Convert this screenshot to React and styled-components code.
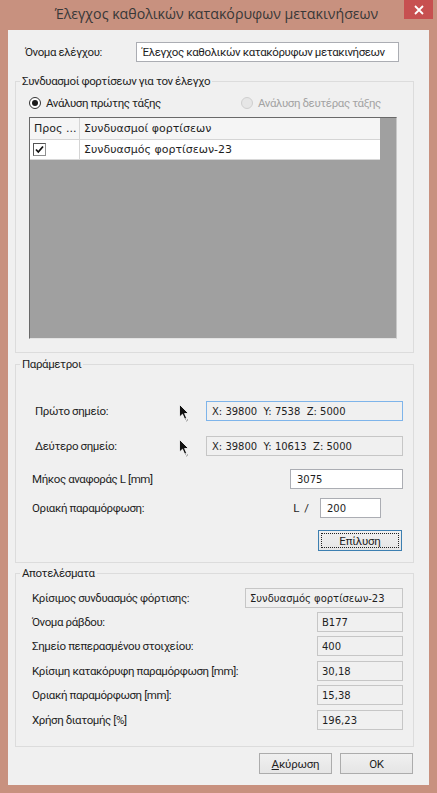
import React from 'react';
import styled, { createGlobalStyle } from 'styled-components';

const GlobalStyle = createGlobalStyle`
  html, body {
    margin: 0;
    padding: 0;
  }
  body {
    background: #c8917f;
    font-family: Roboto, "Noto Sans", sans-serif;
  }
`;

const Window = styled.div`
  width: 437px;
  height: 793px;
  background: #c8917f;
  display: flex;
  flex-direction: column;
  box-sizing: border-box;
`;

const TitleBar = styled.div`
  height: 30px;
  display: grid;
  grid-template-columns: 1fr auto 1fr;
  padding: 0 4px 0 0;
`;

const Title = styled.div`
  font-family: "Open Sans", "Noto Sans", sans-serif;
  font-size: 14.2px;
  color: #383838;
  line-height: 27px;
  white-space: nowrap;
`;

const CloseButton = styled.div`
  justify-self: end;
  width: 29px;
  height: 19px;
  background: #c75050;
  display: flex;
  align-items: center;
  justify-content: center;
`;

const Client = styled.div`
  flex: 1;
  margin: 0 8px 8px;
  background: #f0f0f0;
  padding: 12px 15px 0 7px;
  display: flex;
  flex-direction: column;
  font-family: Roboto, "Noto Sans", sans-serif;
  font-size: 11.5px;
  letter-spacing: -0.4px;
  color: #1e1e1e;
`;

const NameRow = styled.div`
  height: 20px;
  display: flex;
  align-items: center;
  padding: 0 15px 0 10px;
`;

const Label = styled.div`
  flex: 1;
  padding-left: ${p => p.$indent || 0}px;
  white-space: nowrap;
`;

const Field = styled.div`
  box-sizing: border-box;
  width: ${p => p.$w}px;
  flex: none;
  height: 20px;
  display: flex;
  align-items: center;
  padding-left: ${p => p.$pad ?? 5}px;
  background: ${p => (p.$readOnly ? '#f0f0f0' : '#ffffff')};
  border: 1px solid ${p => (p.$focus ? '#7eb4ea' : p.$readOnly ? '#c6c6c6' : '#abadb3')};
  font-family: ${p => (p.$segoe ? 'Roboto, "Noto Sans", sans-serif' : '"DejaVu Sans", sans-serif')};
  font-size: ${p => (p.$segoe ? '11.5px' : '10px')};
  letter-spacing: ${p => (p.$segoe ? '-0.4px' : '0')};
  color: #1e1e1e;
  white-space: nowrap;
  overflow: hidden;
  margin-right: ${p => p.$mr || 0}px;
`;

const Group = styled.fieldset`
  margin: ${p => p.$mt}px 0 0;
  padding: 0;
  border: 1px solid #dcdcdc;
  min-width: 0;
`;

const Legend = styled.legend`
  margin-left: 4px;
  padding: 0 2px;
  font-size: 11.5px;
  line-height: 14px;
  color: #1e1e1e;
`;

const GroupBody = styled.div`
  display: flex;
  flex-direction: column;
  padding: ${p => p.$pad};
`;

const RadioRow = styled.div`
  height: 14px;
  margin-top: 8px;
  display: flex;
  align-items: center;
`;

const RadioItem = styled.label`
  display: flex;
  align-items: center;
  gap: 5px;
  width: ${p => p.$w}px;
  color: ${p => (p.$disabled ? '#a3a3a3' : '#1e1e1e')};
  white-space: nowrap;
`;

const RadioDot = styled.span`
  box-sizing: border-box;
  width: 12px;
  height: 12px;
  border-radius: 50%;
  border: 1px solid ${p => (p.$disabled ? '#cfcfcf' : '#333333')};
  background: ${p => (p.$disabled ? '#e6e6e6' : '#ffffff')};
  display: flex;
  align-items: center;
  justify-content: center;

  &::after {
    content: '';
    width: 6px;
    height: 6px;
    border-radius: 50%;
    background: ${p => (p.$checked ? '#1a1a1a' : 'transparent')};
  }
`;

const GridBox = styled.div`
  margin-top: 7px;
  width: 368px;
  height: 222px;
  box-sizing: border-box;
  background: #a0a0a0;
  border-top: 1px solid #696969;
  border-left: 1px solid #696969;
  border-right: 1px solid #c8c8c8;
  border-bottom: 1px solid #e3e3e3;
  font-family: "DejaVu Sans", sans-serif;
  font-size: 11px;
  letter-spacing: 0;
  color: #1e1e1e;
`;

const GridRow = styled.div`
  width: 350px;
  height: ${p => (p.$header ? 22 : 20)}px;
  display: grid;
  grid-template-columns: 50px 1fr;
  background: ${p => (p.$header ? '#f5f5f5' : '#ffffff')};
  box-sizing: border-box;
  border-bottom: 1px solid ${p => (p.$header ? '#d5d5d5' : '#d8d8d8')};
`;

const GridCell = styled.div`
  display: flex;
  align-items: center;
  padding-left: ${p => p.$pad ?? 4}px;
  border-right: ${p => (p.$sep ? '1px solid #d5d5d5' : 'none')};
  white-space: nowrap;
  overflow: hidden;
`;

const CheckBox = styled.span`
  box-sizing: border-box;
  width: 13px;
  height: 13px;
  border: 1px solid #8e8f8f;
  border-top-color: #555;
  border-left-color: #555;
  background: #fff;
  display: flex;
  align-items: center;
  justify-content: center;
`;

const ParamRow = styled.div`
  display: flex;
  align-items: center;
  justify-content: ${p => (p.$end ? 'flex-end' : 'flex-start')};
  margin-top: ${p => p.$mt}px;
`;

const PickIcon = styled.svg`
  width: 11px;
  height: 18px;
  margin: 4px 16px 0 0;
  flex: none;
`;

const Ratio = styled.span`
  margin-right: 10px;
  letter-spacing: 1px;
`;

const Button = styled.button`
  box-sizing: border-box;
  width: ${p => p.$w}px;
  height: 21px;
  padding: 0;
  background: linear-gradient(#f0f0f0, #e5e5e5);
  border: 1px solid ${p => (p.$focus ? '#3c7fb1' : '#acacac')};
  font-family: Roboto, "Noto Sans", sans-serif;
  font-size: 11.5px;
  letter-spacing: -0.2px;
  color: #1e1e1e;
  display: flex;
  align-items: center;
  justify-content: center;
  margin-right: ${p => p.$mr || 0}px;
`;

const FocusRing = styled.span`
  box-sizing: border-box;
  width: calc(100% - 4px);
  height: calc(100% - 4px);
  border: 1px dotted #222;
  display: flex;
  align-items: center;
  justify-content: center;
`;

const ButtonRow = styled.div`
  margin-top: 6px;
  display: flex;
  justify-content: flex-end;
  gap: 8px;
  padding-right: 1px;
`;

function PickCursor() {
  return (
    <PickIcon viewBox="0 0 11 18">
      <path d="M0.5 0.5 L0.5 13 L3.5 10.2 L5.6 15 L7.6 14.1 L5.6 9.5 L9.5 9.5 Z" fill="#111" stroke="#fff" strokeWidth="0.8" />
      <rect x="6" y="14.5" width="1" height="1" fill="#777" />
      <rect x="8" y="15.5" width="1" height="1" fill="#777" />
      <rect x="7" y="16.5" width="1" height="1" fill="#999" />
    </PickIcon>
  );
}

const results = [
  { label: 'Κρίσιμος συνδυασμός φόρτισης:', value: 'Συνδυασμός φορτίσεων-23', w: 158, mt: 8 },
  { label: 'Όνομα ράβδου:', value: 'B177', w: 86, mt: 4 },
  { label: 'Σημείο πεπερασμένου στοιχείου:', value: '400', w: 86, mt: 4 },
  { label: 'Κρίσιμη κατακόρυφη παραμόρφωση [mm]:', value: '30,18', w: 86, mt: 5 },
  { label: 'Οριακή παραμόρφωση [mm]:', value: '15,38', w: 86, mt: 4 },
  { label: 'Χρήση διατομής [%]', value: '196,23', w: 86, mt: 5 },
];

export default function App() {
  return (
    <>
      <GlobalStyle />
      <Window>
        <TitleBar>
          <div />
          <Title>Έλεγχος καθολικών κατακόρυφων μετακινήσεων</Title>
          <CloseButton>
            <svg width="10" height="10" viewBox="0 0 10 10">
              <path d="M1 1 L9 9 M9 1 L1 9" stroke="#fff" strokeWidth="1.8" />
            </svg>
          </CloseButton>
        </TitleBar>

        <Client>
          <NameRow>
            <Label>Όνομα ελέγχου:</Label>
            <Field $w={263} $segoe>Έλεγχος καθολικών κατακόρυφων μετακινήσεων</Field>
          </NameRow>

          <Group $mt={12}>
            <Legend>Συνδυασμοί φορτίσεων για τον έλεγχο</Legend>
            <GroupBody $pad="0 16px 13px 13px">
              <RadioRow>
                <RadioItem $w={212}>
                  <RadioDot $checked />
                  Ανάλυση πρώτης τάξης
                </RadioItem>
                <RadioItem $disabled>
                  <RadioDot $disabled />
                  Ανάλυση δευτέρας τάξης
                </RadioItem>
              </RadioRow>
              <GridBox>
                <GridRow $header>
                  <GridCell $sep>Προς ...</GridCell>
                  <GridCell>Συνδυασμοί φορτίσεων</GridCell>
                </GridRow>
                <GridRow>
                  <GridCell $sep $pad={3}>
                    <CheckBox>
                      <svg width="9" height="9" viewBox="0 0 9 9">
                        <path d="M1 4.5 L3.3 7 L8 1.5" fill="none" stroke="#111" strokeWidth="1.8" />
                      </svg>
                    </CheckBox>
                  </GridCell>
                  <GridCell>Συνδυασμός φορτίσεων-23</GridCell>
                </GridRow>
              </GridBox>
            </GroupBody>
          </Group>

          <Group $mt={4}>
            <Legend>Παράμετροι</Legend>
            <GroupBody $pad="0 10px 11px 16px">
              <ParamRow $mt={29}>
                <Label $indent={3}>Πρώτο σημείο:</Label>
                <PickCursor />
                <Field $w={197} $readOnly $focus>X: 39800&nbsp; Y: 7538&nbsp; Z: 5000</Field>
              </ParamRow>
              <ParamRow $mt={13}>
                <Label $indent={3}>Δεύτερο σημείο:</Label>
                <PickCursor />
                <Field $w={197} $readOnly>X: 39800&nbsp; Y: 10613&nbsp; Z: 5000</Field>
              </ParamRow>
              <ParamRow $mt={12}>
                <Label>Μήκος αναφοράς L [mm]</Label>
                <Field $w={113} $pad={6}>3075</Field>
              </ParamRow>
              <ParamRow $mt={9}>
                <Label>Οριακή παραμόρφωση:</Label>
                <Ratio>L /</Ratio>
                <Field $w={61} $pad={6} $mr={22}>200</Field>
              </ParamRow>
              <ParamRow $mt={12} $end>
                <Button $w={84} $focus $mr={1}>
                  <FocusRing>Επίλυση</FocusRing>
                </Button>
              </ParamRow>
            </GroupBody>
          </Group>

          <Group $mt={3}>
            <Legend>Αποτελέσματα</Legend>
            <GroupBody $pad="0 10px 16px 16px">
              {results.map(r => (
                <ParamRow key={r.label} $mt={r.mt}>
                  <Label>{r.label}</Label>
                  <Field $w={r.w} $readOnly $pad={4}>{r.value}</Field>
                </ParamRow>
              ))}
            </GroupBody>
          </Group>

          <ButtonRow>
            <Button $w={73}><span><u>Α</u>κύρωση</span></Button>
            <Button $w={73}>OK</Button>
          </ButtonRow>
        </Client>
      </Window>
    </>
  );
}
